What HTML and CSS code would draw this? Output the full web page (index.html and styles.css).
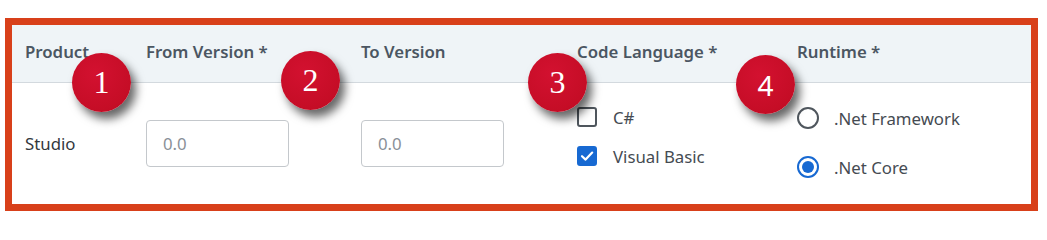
FILE: index.html
```html
<!DOCTYPE html>
<html>
<head>
<meta charset="utf-8">
<link rel="stylesheet" href="styles.css">
</head>
<body>
<div class="frame">
  <div class="table">
    <div class="row head">
      <div class="cell">Product</div>
      <div class="cell">From Version *</div>
      <div class="cell">To Version</div>
      <div class="cell">Code Language *</div>
      <div class="cell">Runtime *</div>
    </div>
    <div class="row body">
      <div class="cell product">Studio</div>
      <div class="cell"><div class="input">0.0</div></div>
      <div class="cell"><div class="input">0.0</div></div>
      <div class="cell checks">
        <div class="opt"><span class="box"></span><span>C#</span></div>
        <div class="opt"><span class="box checked"><svg viewBox="0 0 20 20" width="20" height="20"><path d="M5 10.2 L8.6 13.6 L15.2 6.6" fill="none" stroke="#fff" stroke-width="2.2" stroke-linecap="round" stroke-linejoin="round"/></svg></span><span>Visual Basic</span></div>
      </div>
      <div class="cell radios">
        <div class="opt"><span class="radio"></span><span>.Net Framework</span></div>
        <div class="opt"><span class="radio on"></span><span>.Net Core</span></div>
      </div>
    </div>
  </div>
  <div class="badge b1 serif">1</div>
  <div class="badge b2 serif">2</div>
  <div class="badge b3 serif">3</div>
  <div class="badge b4">4</div>
</div>
</body>
</html>
```
FILE: styles.css
```css
html, body { margin: 0; padding: 0; background: #fff; }
body { font-family: "Noto Sans", "Open Sans", sans-serif; }

.frame {
  position: relative;
  margin: 18px 0 0 5px;
  width: 1033px;
  height: 193px;
  box-sizing: border-box;
  border: 7px solid #d8401a;
  background: #fff;
}

.table { display: flex; flex-direction: column; height: 100%; }

.row {
  display: grid;
  grid-template-columns: 121px 215px 216px 220px 1fr;
  padding-left: 13px;
}

.head {
  height: 58px;
  box-sizing: border-box;
  background: #eff4f7;
  border-bottom: 1px solid #d3d9de;
  align-items: center;
  font-size: 16.8px;
  font-weight: 600;
  color: #4b5662;
  padding-bottom: 5px;
}

.body { flex: 1; align-items: center; font-size: 16.8px; color: #33383d; }

.input {
  width: 143px;
  height: 47px;
  box-sizing: border-box;
  border: 1px solid #c4c8cc;
  border-radius: 4px;
  display: flex;
  align-items: center;
  padding-left: 16px;
  color: #8a9097;
  font-size: 16.8px;
}

.checks, .radios { display: flex; flex-direction: column; align-self: stretch; color: #454b52; }
.checks { padding-top: 24px; gap: 19px; }
.radios { padding-top: 25px; gap: 29px; }

.opt { display: flex; align-items: center; height: 20px; gap: 16px; }

.box {
  width: 20px; height: 20px; box-sizing: border-box;
  border: 2px solid #4f565d; border-radius: 3px;
  flex: none;
}
.box.checked { background: #1769d2; border-color: #1769d2; }
.box.checked svg { display: block; margin: -2px; }

.radio {
  width: 22px; height: 22px; box-sizing: border-box;
  border: 2px solid #4f565d; border-radius: 50%;
  flex: none; display: flex; align-items: center; justify-content: center;
}
.radio.on { border-color: #1769d2; }
.radio.on::after { content: ""; width: 12px; height: 12px; border-radius: 50%; background: #1769d2; }
.radios .opt { gap: 15px; }

.badge {
  position: absolute;
  width: 59px; height: 59px;
  border-radius: 50%;
  background: radial-gradient(circle at 40% 35%, #d31130 0%, #c50d26 70%, #b80a20 100%);
  box-shadow: 5px 7px 10px rgba(0,0,0,0.6);
  color: #fff;
  display: flex; align-items: center; justify-content: center;
  font-family: "Noto Sans", sans-serif;
  font-size: 28px;
}
.badge.serif { font-family: "Liberation Serif", "Times New Roman", serif; font-size: 32px; }
.b1 { left: 60px; top: 28px; }
.b2 { left: 269px; top: 26px; }
.b3 { left: 516px; top: 28px; }
.b4 { left: 724px; top: 30px; }
```
